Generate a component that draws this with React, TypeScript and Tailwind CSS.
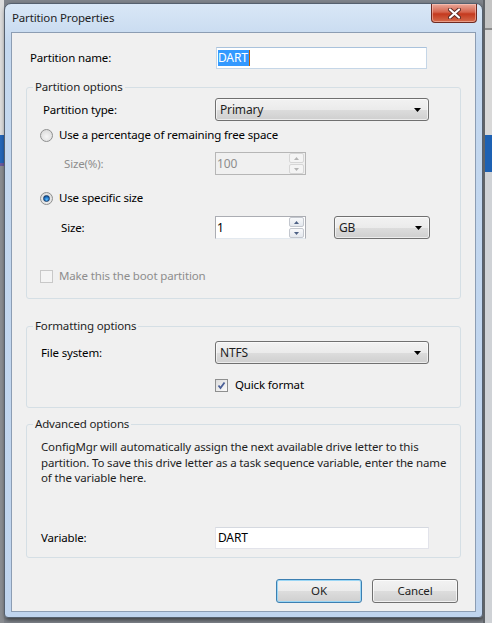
import React from 'react';

const btnFace = 'bg-[linear-gradient(#f2f2f2,#ebebeb_50%,#dddddd_50%,#cfcfcf)]';

function Arrow() {
  return (
    <svg width="7" height="4" viewBox="0 0 7 4">
      <polygon points="0,0 7,0 3.5,4" fill="#000" />
    </svg>
  );
}

function Combo({ value, w }: { value: string; w: string }) {
  return (
    <div className={`${w} h-[23px] rounded-[3px] border border-[#707070] ${btnFace} flex items-center justify-between pl-[4px] pr-[7px] shadow-[inset_0_0_0_1px_rgba(255,255,255,0.6)]`}>
      <span className="text-[#1e1e1e] text-[12px]">{value}</span>
      <Arrow />
    </div>
  );
}

function SpinBtn({ up, disabled }: { up?: boolean; disabled?: boolean }) {
  const fill = disabled ? '#b4b4b4' : '#4d6185';
  return (
    <div className={`h-[10px] w-[15px] flex items-center justify-center border rounded-[2px] ${disabled ? 'border-[#d6d6d6] bg-[#f4f4f4]' : 'border-[#c3c7ce] bg-[linear-gradient(#f8f9fb,#e4e8ee)]'}`}>
      <svg width="5" height="3" viewBox="0 0 5 3">
        <polygon points={up ? '0,3 5,3 2.5,0' : '0,0 5,0 2.5,3'} fill={fill} />
      </svg>
    </div>
  );
}

function Spin({ value, disabled }: { value: string; disabled?: boolean }) {
  return (
    <div className={`w-[91px] h-[23px] border flex items-stretch ${disabled ? 'border-[#b6b6b6] bg-[#f0f0f0] text-[#8d8d8d]' : 'border-[#abadb3] border-b-[#e3e9ef] bg-white text-black'}`}>
      <span className="flex-1 pl-[1px] leading-[21px] text-[12px]">{value}</span>
      <div className="flex flex-col justify-center gap-[1px] pr-[1px]">
        <SpinBtn up disabled={disabled} />
        <SpinBtn disabled={disabled} />
      </div>
    </div>
  );
}

function Radio({ checked }: { checked?: boolean }) {
  return (
    <div className="w-[13px] h-[13px] shrink-0 rounded-full border border-[#8e8f8f] bg-[radial-gradient(circle_at_50%_60%,#f6f6f6,#d4d4d4)] flex items-center justify-center">
      {checked && (
        <div className="w-[7px] h-[7px] rounded-full bg-[radial-gradient(circle_at_55%_70%,#5ec0ff,#1b6fc3_55%,#0b2f5c)] border border-[#1a3f6a]" />
      )}
    </div>
  );
}

function Check({ checked, disabled }: { checked?: boolean; disabled?: boolean }) {
  return (
    <div className={`w-[13px] h-[13px] shrink-0 border flex items-center justify-center ${disabled ? 'border-[#c8c8c8] bg-[#f4f4f4]' : 'border-[#8e8f8f] bg-[linear-gradient(135deg,#dcdcdc,#fbfbfb)]'}`}>
      {checked && (
        <svg width="9" height="9" viewBox="0 0 9 9">
          <path d="M1.5 4.5 L3.5 7 L7.5 1.5" stroke="#4a5f97" strokeWidth="1.8" fill="none" />
        </svg>
      )}
    </div>
  );
}

function Group({ title, children, className }: { title: string; children: React.ReactNode; className: string }) {
  return (
    <fieldset className={`mx-[14px] border border-[#d5dfe5] rounded-[3px] ${className}`}>
      <legend className="ml-[6px] px-[2px] leading-[16px] text-[#1e1e1e]">{title}</legend>
      {children}
    </fieldset>
  );
}

export default function App() {
  return (
    <div className="w-[492px] h-[623px] overflow-hidden flex bg-[#7f848b] text-[11.5px] tracking-[-0.15px] text-black font-['Noto_Sans','Liberation_Sans',sans-serif] whitespace-nowrap">
      <div className="w-[4px] shrink-0 flex flex-col">
        <div className="h-[135px] bg-[#dcdcdc]" />
        <div className="h-[28px] bg-[#2466b8]" />
        <div className="h-[3px] bg-[#6a5a9e]" />
        <div className="flex-1 bg-[#8a8d92]" />
      </div>

      <div className="w-[479px] shrink-0 flex flex-col">
        <div className="mt-[3px] h-[615px] rounded-t-[7px] rounded-b-[4px] border border-[#55606e] bg-[linear-gradient(#d9e7f6,#c4d8ef_40px,#bfd4ee)] flex flex-col shadow-[1px_2px_4px_rgba(0,0,0,0.55)]">
          <div className="h-[28px] shrink-0 flex items-start justify-between pl-[7px] pr-[5px]">
            <span className="mt-[6px] leading-[16px] text-[#1e1e1e]">Partition Properties</span>
            <div className="w-[46px] h-[19px] rounded-b-[4px] border border-t-0 border-[#6e2a22] bg-[linear-gradient(#eaa99a,#d5644d_45%,#c4391e_55%,#d46b4c)] flex items-center justify-center shadow-[inset_0_0_0_1px_rgba(255,210,200,0.5)]">
              <svg width="13" height="11" viewBox="0 0 13 11">
                <path d="M2 1.5 L11 9.5 M11 1.5 L2 9.5" stroke="#5a2a24" strokeWidth="4" strokeLinecap="round" />
                <path d="M2 1.5 L11 9.5 M11 1.5 L2 9.5" stroke="#ffffff" strokeWidth="2.2" strokeLinecap="round" />
              </svg>
            </div>
          </div>

          <div className="mx-[6px] mb-[5px] flex-1 min-h-0 bg-[#f0f0f0] border border-[#8c9db3] flex flex-col">
            <div className="pt-[14px] pl-[18px] flex items-center">
              <span className="w-[186px]">Partition name:</span>
              <div className="w-[211px] h-[22px] border border-[#c5d6e7] border-t-[#a9c2dc] bg-white flex items-center pl-[1px]">
                <span className="bg-[#3399ff] text-white text-[12px] leading-[16px] pr-[1px]">DART</span>
                <span className="w-[1px] h-[16px] bg-[#c05a00]" />
              </div>
            </div>

            <Group title="Partition options" className="mt-[10px] pb-[14px]">
              <div className="mt-[3px] h-[23px] flex items-center">
                <span className="w-[188px] pl-[16px]">Partition type:</span>
                <Combo value="Primary" w="w-[214px]" />
              </div>
              <div className="mt-[6px] h-[16px] flex items-center gap-[6px] pl-[13px]">
                <Radio />
                <span>Use a percentage of remaining free space</span>
              </div>
              <div className="mt-[9px] h-[23px] flex items-center">
                <span className="w-[188px] pl-[37px] text-[#8d8d8d]">Size(%):</span>
                <Spin value="100" disabled />
              </div>
              <div className="mt-[15px] h-[16px] flex items-center gap-[6px] pl-[13px]">
                <Radio checked />
                <span>Use specific size</span>
              </div>
              <div className="mt-[10px] h-[23px] flex items-center">
                <span className="w-[188px] pl-[34px]">Size:</span>
                <Spin value="1" />
                <div className="ml-[28px]">
                  <Combo value="GB" w="w-[96px]" />
                </div>
              </div>
              <div className="mt-[29px] h-[16px] flex items-center gap-[6px] pl-[13px]">
                <Check disabled />
                <span className="text-[#8d8d8d]">Make this the boot partition</span>
              </div>
            </Group>

            <Group title="Formatting options" className="mt-[19px] pb-[14px]">
              <div className="mt-[7px] h-[23px] flex items-center">
                <span className="w-[188px] pl-[14px]">File system:</span>
                <Combo value="NTFS" w="w-[214px]" />
              </div>
              <div className="mt-[13px] h-[16px] flex items-center">
                <span className="w-[188px]" />
                <Check checked />
                <span className="ml-[7px]">Quick format</span>
              </div>
            </Group>

            <Group title="Advanced options" className="mt-[8px] pb-[8px]">
              <p className="mt-[7px] pl-[14px] leading-[15.5px] text-[#1e1e1e]">
                ConfigMgr will automatically assign the next available drive letter to this
                <br />
                partition. To save this drive letter as a task sequence variable, enter the name
                <br />
                of the variable here.
              </p>
              <div className="mt-[41px] h-[22px] flex items-center">
                <span className="w-[188px] pl-[14px]">Variable:</span>
                <div className="w-[214px] h-[22px] border border-[#e2e3ea] border-t-[#d5d9e0] bg-white pl-[2px] leading-[20px] text-[12px]">
                  DART
                </div>
              </div>
            </Group>

            <div className="mt-[21px] pr-[17px] flex justify-end gap-[10px]">
              <button className={`w-[86px] h-[24px] rounded-[3px] border border-[#3c7fb1] ${btnFace} shadow-[inset_0_0_0_1px_#9ad6f5] text-[#1e1e1e]`}>
                OK
              </button>
              <button className={`w-[86px] h-[24px] rounded-[3px] border border-[#707070] ${btnFace} shadow-[inset_0_0_0_1px_rgba(255,255,255,0.7)] text-[#1e1e1e]`}>
                Cancel
              </button>
            </div>
          </div>
        </div>
      </div>

      <div className="flex-1 flex flex-col border-l-[2px] border-[#5f6368]">
        <div className="h-[28px] bg-[#c4c4c4]" />
        <div className="h-[2px] bg-[#8a8a8a]" />
        <div className="h-[105px] bg-[#d8d8d8]" />
        <div className="h-[37px] bg-[#1d61b3]" />
        <div className="flex-1 bg-[#cfd2d6]" />
      </div>
    </div>
  );
}
